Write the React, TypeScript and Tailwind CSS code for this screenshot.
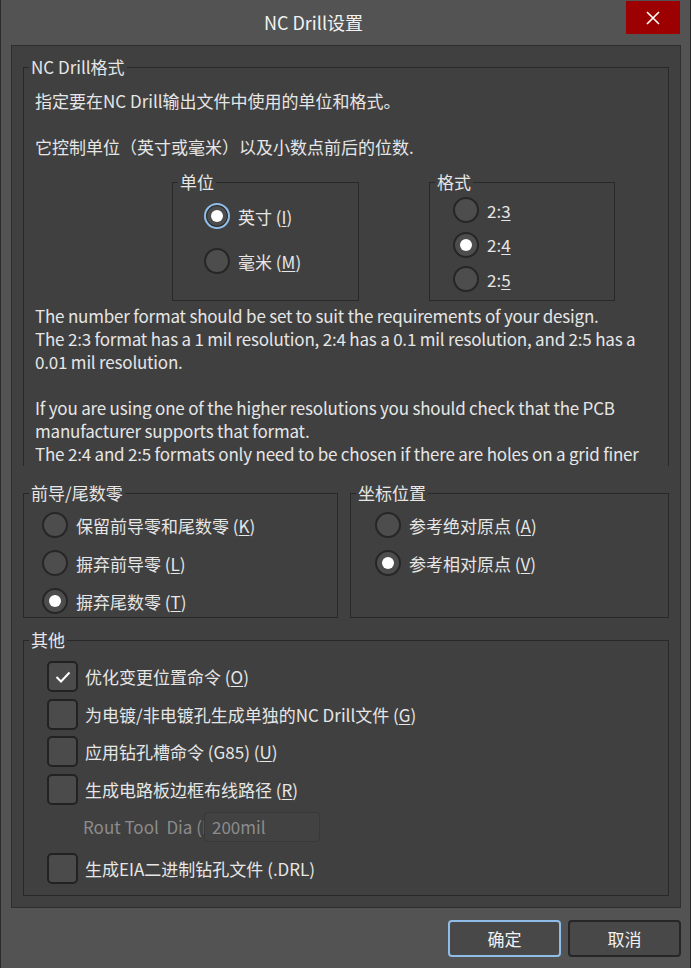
import type { ReactNode } from "react";

// 单选按钮（暗色主题）
function Radio({ checked, focus, children }: { checked?: boolean; focus?: boolean; children: ReactNode }) {
  return (
    <div className="flex h-[26px] items-center">
      <span
        className={[
          "flex h-[26px] w-[26px] shrink-0 items-center justify-center rounded-full border-2 bg-[#4d4d4d]",
          focus ? "border-[#8fbde8] shadow-[inset_0_0_0_1px_#262626]" : "border-[#262626]",
        ].join(" ")}
      >
        {checked && <span className="h-[12px] w-[12px] rounded-full bg-white" />}
      </span>
      <span className="ml-[8px] leading-[23px] whitespace-nowrap">{children}</span>
    </div>
  );
}

function Check({ checked, children }: { checked?: boolean; children: ReactNode }) {
  return (
    <div className="flex h-[31px] items-center">
      <span className="flex h-[31px] w-[31px] shrink-0 items-center justify-center rounded-[5px] border-2 border-[#222222] bg-[#4b4b4b]">
        {checked && (
          <svg width="16" height="12" viewBox="0 0 16 12">
            <polyline points="1.5,6 6,10.5 14.5,1.5" fill="none" stroke="#ffffff" strokeWidth="2" />
          </svg>
        )}
      </span>
      <span className="ml-[7px] leading-[23px] whitespace-nowrap">{children}</span>
    </div>
  );
}

function Group({ title, className, children }: { title: string; className?: string; children: ReactNode }) {
  return (
    <fieldset className={"min-w-0 border border-[#282828] " + (className ?? "")}>
      <legend className="ml-[5px] px-[2px] leading-[20px] whitespace-nowrap">{title}</legend>
      {children}
    </fieldset>
  );
}

const U = ({ children }: { children: ReactNode }) => <u className="underline-offset-2">{children}</u>;

export default function App() {
  return (
    <div className="flex h-[968px] w-[691px] flex-col border-x border-[#2a2a2a] bg-[#535353] font-['Noto_Sans_CJK_SC','Liberation_Sans',sans-serif] text-[17px] text-[#e6e6e6]">
      {/* 标题栏 */}
      <div className="flex h-[45px] shrink-0">
        <div className="flex flex-1 items-center justify-center pb-[1px] text-[18px] text-[#f2f2f2]">NC Drill设置</div>
        <div className="mt-[1px] mr-[10px] flex h-[33px] w-[54px] items-center justify-center bg-[#9c0000]">
          <svg width="14" height="14" viewBox="0 0 14 14">
            <path d="M1 1 L13 13 M13 1 L1 13" stroke="#ffffff" strokeWidth="1.6" />
          </svg>
        </div>
      </div>

      {/* 主面板 */}
      <div className="ml-[10px] h-[863px] w-[670px] shrink-0 border border-[#2e2e2e] bg-[#404040] px-[11px] pt-[11px]">
        <Group title="NC Drill格式" className="border-b-0">
          {/* 可滚动说明区，底部被截断 */}
          <div className="h-[389px] overflow-hidden pl-[11px] pt-[12px] leading-[23px]">
            <div className="whitespace-nowrap">指定要在NC Drill输出文件中使用的单位和格式。</div>
            <div className="h-[23px]" />
            <div className="whitespace-nowrap">它控制单位（英寸或毫米）以及小数点前后的位数.</div>

            <div className="mt-[14px] flex">
              <Group title="单位" className="ml-[137px] h-[129px] w-[187px]">
                <div className="flex flex-col gap-[19px] pl-[31px] pt-[11px]">
                  <Radio checked focus>英寸 (<U>I</U>)</Radio>
                  <Radio>毫米 (<U>M</U>)</Radio>
                </div>
              </Group>
              <Group title="格式" className="ml-[70px] h-[129px] w-[186px]">
                <div className="flex flex-col gap-[8.5px] pl-[23px] pt-[5px]">
                  <Radio>2:<U>3</U></Radio>
                  <Radio checked>2:<U>4</U></Radio>
                  <Radio>2:<U>5</U></Radio>
                </div>
              </Group>
            </div>

            <div className="mt-[3px] whitespace-nowrap tracking-[-0.2px]">
              The number format should be set to suit the requirements of your design.
              <br />
              The 2:3 format has a 1 mil resolution, 2:4 has a 0.1 mil resolution, and 2:5 has a
              <br />
              0.01 mil resolution.
              <br />
              <br />
              If you are using one of the higher resolutions you should check that the PCB
              <br />
              manufacturer supports that format.
              <br />
              The 2:4 and 2:5 formats only need to be chosen if there are holes on a grid finer
            </div>
          </div>
        </Group>

        <div className="mt-[17px] flex gap-[12px]">
          <Group title="前导/尾数零" className="h-[135px] w-[315px]">
            <div className="flex flex-col gap-[12px] pl-[18px] pt-[9px]">
              <Radio>保留前导零和尾数零 (<U>K</U>)</Radio>
              <Radio>摒弃前导零 (<U>L</U>)</Radio>
              <Radio checked>摒弃尾数零 (<U>T</U>)</Radio>
            </div>
          </Group>
          <Group title="坐标位置" className="h-[135px] flex-1">
            <div className="flex flex-col gap-[12px] pl-[24px] pt-[9px]">
              <Radio>参考绝对原点 (<U>A</U>)</Radio>
              <Radio checked>参考相对原点 (<U>V</U>)</Radio>
            </div>
          </Group>
        </div>

        <Group title="其他" className="mt-[12px] h-[266px]">
          <div className="flex flex-col pl-[23px] pt-[11px]">
            <div className="flex flex-col gap-[6.5px]">
              <Check checked>优化变更位置命令 (<U>O</U>)</Check>
              <Check>为电镀/非电镀孔生成单独的NC Drill文件 (<U>G</U>)</Check>
              <Check>应用钻孔槽命令 (G85) (<U>U</U>)</Check>
              <Check>生成电路板边框布线路径 (<U>R</U>)</Check>
            </div>
            <div className="mt-[7px] flex h-[30px] items-center">
              <span className="ml-[36px] w-[121px] overflow-hidden whitespace-nowrap text-[#8c8c8c]">Rout Tool&nbsp; Dia (I</span>
              <div className="flex h-[30px] w-[116px] items-center rounded-[4px] border border-[#383838] bg-[#424242] pl-[7px] text-[#8c8c8c]">
                200mil
              </div>
            </div>
            <div className="mt-[11px]">
              <Check>生成EIA二进制钻孔文件 (.DRL)</Check>
            </div>
          </div>
        </Group>
      </div>

      {/* 按钮 */}
      <div className="mt-[12px] mr-[9px] flex justify-end gap-[7px]">
        <button className="h-[37px] w-[113px] rounded-[4px] border-2 border-[#8fbde8] bg-[#484848] text-[17px] text-[#f2f2f2]">确定</button>
        <button className="h-[37px] w-[113px] rounded-[4px] border-2 border-[#262626] bg-[#484848] text-[17px] text-[#f2f2f2]">取消</button>
      </div>
    </div>
  );
}
